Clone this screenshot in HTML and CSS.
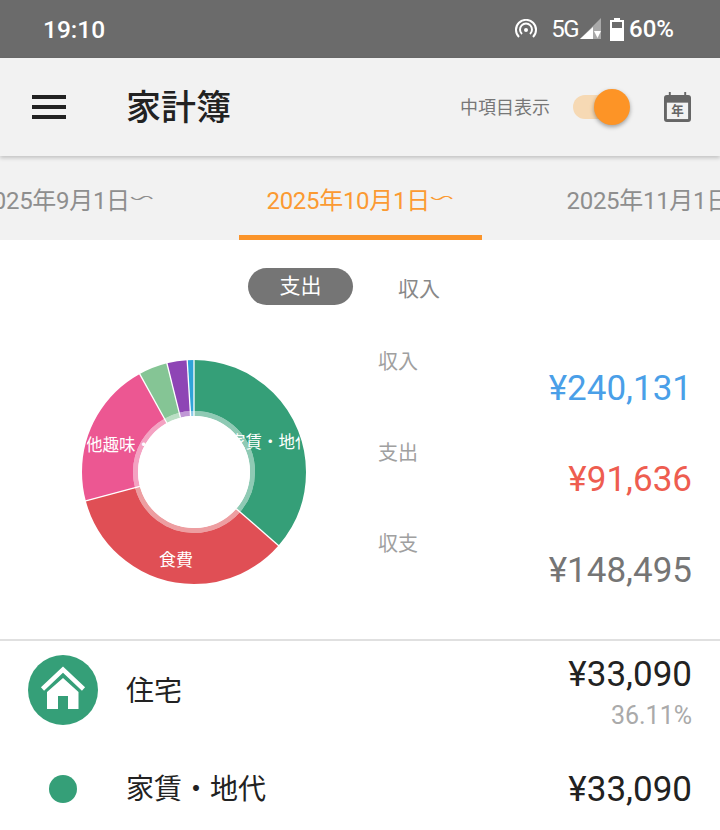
FILE: index.html
```html
<!DOCTYPE html>
<html lang="ja">
<head>
    <meta charset="UTF-8">
    <meta name="viewport" content="width=device-width, initial-scale=1.0">
    <title>家計簿</title>
    <link rel="stylesheet" href="styles.css">
</head>
<body>

<div class="status-bar">
    <span class="clock">19:10</span>
    <div class="status-icons">
        <svg class="hotspot" width="24" height="20" viewBox="0 0 24 20">
            <path d="M5 18a10 10 0 1 1 14 0" fill="none" stroke="#fff" stroke-width="2"/>
            <path d="M8 15a6 6 0 1 1 8 0" fill="none" stroke="#fff" stroke-width="2"/>
            <circle cx="12" cy="11" r="2" fill="#fff"/>
        </svg>
        <span class="net">5G</span>
        <svg class="signal" width="22" height="22" viewBox="0 0 22 22">
            <path d="M21 0V21H0Z" fill="#a9a9a9"/>
            <path d="M13 9V21H0Z" fill="#fff"/>
            <path d="M14 13H21L17.500 20Z" fill="#fff"/>
        </svg>
        <svg class="battery" width="14" height="23" viewBox="0 0 14 23">
            <path d="M4 0H10V2H14V23H0V2H4Z" fill="#fff"/>
            <rect x="2" y="4" width="10" height="6" fill="#6b6b6b"/>
        </svg>
        <span class="percent">60%</span>
    </div>
</div>

<header class="app-bar">
    <button class="menu-btn"><span></span><span></span><span></span></button>
    <h1 class="title">家計簿</h1>
    <span class="toggle-label">中項目表示</span>
    <div class="toggle"><div class="toggle-knob"></div></div>
    <svg class="calendar" width="27" height="30" viewBox="0 0 28 31">
        <path d="M5 0h2v3h14V0h2v3h2a3 3 0 0 1 3 3v22a3 3 0 0 1-3 3H3a3 3 0 0 1-3-3V6a3 3 0 0 1 3-3h2Z" fill="#666"/>
        <rect x="3" y="11" width="22" height="17" fill="#f2f2f2"/>
        <text x="14" y="24" text-anchor="middle" class="calendar-text">年</text>
    </svg>
</header>

<nav class="tabs">
    <div class="tab prev">2025年9月1日<span class="wave">〜</span></div>
    <div class="tab active">2025年10月1日<span class="wave">〜</span></div>
    <div class="tab next">2025年11月1日<span class="wave">〜</span></div>
</nav>

<div class="switch-row">
    <span class="pill">支出</span>
    <span class="pill-off">収入</span>
</div>

<section class="summary">
    <svg class="donut" width="226" height="226" viewBox="-113 -113 226 226">
        <defs>
            <clipPath id="pie-clip"><circle r="111"/></clipPath>
        </defs>
        <g transform="rotate(-90)" fill="none" stroke-width="51">
            <circle r="86.500" pathLength="360" stroke="#359f78" stroke-dasharray="131 229"/>
            <circle r="86.500" pathLength="360" stroke="#e04f55" stroke-dasharray="124 236" stroke-dashoffset="-131"/>
            <circle r="86.500" pathLength="360" stroke="#ec5792" stroke-dasharray="76 284" stroke-dashoffset="-255"/>
            <circle r="86.500" pathLength="360" stroke="#85c595" stroke-dasharray="15 345" stroke-dashoffset="-331"/>
            <circle r="86.500" pathLength="360" stroke="#8e45b5" stroke-dasharray="10.500 349.500" stroke-dashoffset="-346"/>
            <circle r="86.500" pathLength="360" stroke="#2fa3d8" stroke-dasharray="3.500 356.500" stroke-dashoffset="-356.500"/>
        </g>
        <g transform="rotate(-90)" fill="none" stroke-width="5" opacity="0.55">
            <circle r="58.500" pathLength="360" stroke="#359f78" stroke-dasharray="131 229"/>
            <circle r="58.500" pathLength="360" stroke="#e04f55" stroke-dasharray="124 236" stroke-dashoffset="-131"/>
            <circle r="58.500" pathLength="360" stroke="#ec5792" stroke-dasharray="76 284" stroke-dashoffset="-255"/>
            <circle r="58.500" pathLength="360" stroke="#85c595" stroke-dasharray="15 345" stroke-dashoffset="-331"/>
            <circle r="58.500" pathLength="360" stroke="#8e45b5" stroke-dasharray="10.500 349.500" stroke-dashoffset="-346"/>
            <circle r="58.500" pathLength="360" stroke="#2fa3d8" stroke-dasharray="3.500 356.500" stroke-dashoffset="-356.500"/>
        </g>
        <g stroke="#fff" stroke-width="1.300">
            <line y1="-56" y2="-113" transform="rotate(0)"/>
            <line y1="-56" y2="-113" transform="rotate(131)"/>
            <line y1="-56" y2="-113" transform="rotate(255)"/>
            <line y1="-56" y2="-113" transform="rotate(331)"/>
            <line y1="-56" y2="-113" transform="rotate(346)"/>
            <line y1="-56" y2="-113" transform="rotate(356.500)"/>
        </g>
        <g class="donut-label" clip-path="url(#pie-clip)">
            <text x="35" y="-24">家賃・地代</text>
            <text x="-141" y="-21">その他趣味・教養</text>
            <text x="-35" y="94" class="donut-label-big">食費</text>
        </g>
        <circle r="56" fill="#fff"/>
    </svg>

    <div class="totals">
        <div class="total-row">
            <div class="total-label">収入</div>
            <div class="total-value income">¥240,131</div>
        </div>
        <div class="total-row">
            <div class="total-label">支出</div>
            <div class="total-value expense">¥91,636</div>
        </div>
        <div class="total-row">
            <div class="total-label">収支</div>
            <div class="total-value balance">¥148,495</div>
        </div>
    </div>
</section>

<section class="list">
    <div class="list-row main-row">
        <div class="icon-col">
            <div class="cat-icon">
                <svg width="70" height="70" viewBox="0 0 70 70">
                    <path d="M14.500 34L35 14.500L55.500 34" fill="none" stroke="#fff" stroke-width="4.500"/>
                    <path d="M19 54V37L35 23L50.500 37V54H40V41H30V54Z" fill="#fff"/>
                </svg>
            </div>
        </div>
        <div class="cat-name">住宅</div>
        <div class="cat-nums">
            <div class="amount">¥33,090</div>
            <div class="rate">36.11%</div>
        </div>
    </div>
    <div class="list-row sub-row">
        <div class="icon-col"><div class="cat-dot"></div></div>
        <div class="cat-name">家賃・地代</div>
        <div class="cat-nums">
            <div class="amount">¥33,090</div>
        </div>
    </div>
</section>

</body>
</html>
```

FILE: styles.css
```css
body {
    margin: 0;
    height: 830px;
    overflow: hidden;
    background-color: #fff;
    font-family: Roboto, "Noto Sans CJK JP", sans-serif;
}
.status-bar {
    height: 58px;
    background-color: #6b6b6b;
    color: #fff;
    display: flex;
    align-items: center;
    justify-content: space-between;
    padding: 0 46px 0 43px;
}
.clock {
    font-size: 24.500px;
    font-weight: 500;
}
.status-icons {
    display: flex;
    align-items: center;
}
.hotspot {
    margin-right: 13px;
}
.net {
    font-size: 24px;
    letter-spacing: -1.500px;
    margin-right: 2px;
}
.signal {
    margin-right: 8px;
}
.battery {
    margin-right: 5px;
}
.percent {
    font-size: 24px;
    font-weight: 500;
}
.app-bar {
    height: 98px;
    background-color: #f2f2f2;
    box-shadow: 0 2px 4px rgba(0, 0, 0, 0.2);
    display: flex;
    align-items: center;
    padding: 0 29px 0 32px;
    position: relative;
}
.menu-btn {
    width: 34px;
    height: 24px;
    padding: 0;
    border: none;
    background: none;
    display: flex;
    flex-direction: column;
    justify-content: space-between;
}
.menu-btn span {
    display: block;
    height: 4px;
    background-color: #222;
}
.title {
    margin: 0 0 6px 60px;
    flex: 1;
    font-size: 35px;
    font-weight: 500;
    color: #222;
}
.toggle-label {
    font-size: 18px;
    color: #777;
    margin: 0 23px 2px 0;
}
.toggle {
    width: 44px;
    height: 24px;
    border-radius: 12px;
    background-color: #f6d9b4;
    position: relative;
    margin-right: 47px;
}
.toggle-knob {
    position: absolute;
    top: -6px;
    left: 21px;
    width: 36px;
    height: 36px;
    border-radius: 50%;
    background-color: #fd9426;
    box-shadow: 0 2px 4px rgba(0, 0, 0, 0.35);
}
.calendar-text {
    font-size: 13px;
    font-weight: 700;
    fill: #666;
}
.tabs {
    height: 84px;
    background-color: #f2f2f2;
    display: flex;
    justify-content: center;
    gap: 57px;
    overflow: hidden;
}
.tab {
    flex: 0 0 243px;
    box-sizing: border-box;
    display: flex;
    justify-content: center;
    align-items: center;
    white-space: nowrap;
    font-size: 24px;
    letter-spacing: -0.300px;
    color: #8e8e8e;
}
.tab.prev {
    justify-content: flex-end;
    padding-right: 28px;
}
.tab.next {
    justify-content: flex-start;
    padding-left: 28px;
}
.tab.active {
    color: #fb9a32;
    border-bottom: 5px solid #fb942a;
    padding-top: 5px;
}
.wave {
    display: inline-block;
    transform: scaleY(-0.550);
}
.switch-row {
    display: flex;
    align-items: center;
    margin-top: 28px;
    padding-left: 248px;
}
.pill {
    width: 105px;
    height: 37px;
    line-height: 37px;
    border-radius: 19px;
    background-color: #757575;
    color: #fff;
    font-size: 21px;
    text-align: center;
}
.pill-off {
    margin-left: 45px;
    font-size: 21px;
    color: #888;
}
.summary {
    height: 334px;
    display: flex;
    align-items: center;
    padding-left: 81px;
    box-sizing: border-box;
}
.donut {
    flex: none;
}
.donut-label {
    font-size: 16.500px;
    fill: #fff;
}
.donut-label-big {
    font-size: 17px;
}
.totals {
    align-self: flex-start;
    margin: 44px 0 0 71px;
    width: 314px;
}
.total-row {
    height: 91px;
}
.total-label {
    font-size: 20px;
    color: #a0a0a0;
    line-height: 26px;
}
.total-value {
    font-size: 35px;
    line-height: 28px;
    text-align: right;
}
.income {
    color: #4a9fe8;
}
.expense {
    color: #ee5d50;
}
.balance {
    color: #757575;
}
.list {
    border-top: 2px solid #e0e0e0;
}
.list-row {
    display: flex;
    align-items: center;
    padding-right: 28px;
}
.main-row {
    height: 98px;
}
.sub-row {
    height: 99px;
}
.cat-nums {
    margin-top: 2px;
    text-align: right;
}
.main-row .cat-nums {
    margin-top: 10px;
}
.icon-col {
    width: 127px;
    display: flex;
    padding-left: 28px;
    box-sizing: border-box;
}
.cat-icon {
    width: 70px;
    height: 70px;
    border-radius: 50%;
    background-color: #359f78;
}
.cat-icon svg {
    display: block;
}
.cat-dot {
    width: 28px;
    height: 28px;
    margin-left: 21px;
    border-radius: 50%;
    background-color: #359f78;
}
.cat-name {
    flex: 1;
    font-size: 28px;
    color: #222;
    margin: 0 0 3px -1px;
}
.amount {
    font-size: 35px;
    color: #222;
    line-height: 41px;
}
.rate {
    font-size: 25px;
    color: #aaa;
    line-height: 41px;
}
```
